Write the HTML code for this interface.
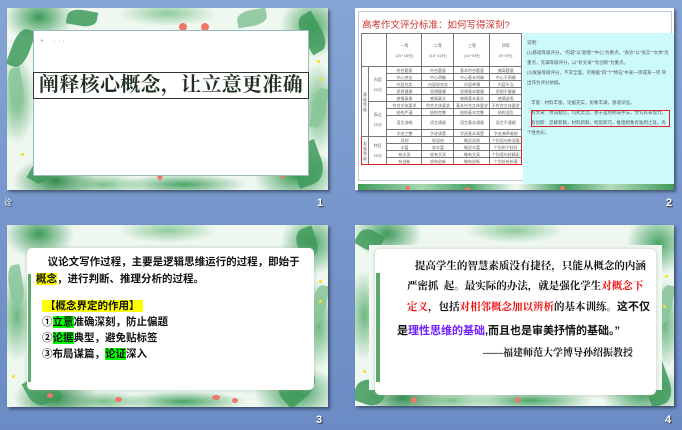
<!DOCTYPE html>
<html><head><meta charset="utf-8"><style>
*{margin:0;padding:0;box-sizing:border-box}
body{width:682px;height:430px;overflow:hidden;background:linear-gradient(180deg,#86a5d6 0%,#7696cc 50%,#6a8bc3 100%);font-family:"Liberation Sans","Noto Sans CJK SC",sans-serif;position:relative}
.s{position:absolute;background:#fff;box-shadow:2px 2px 3px rgba(0,0,0,.45);overflow:hidden}
.num{position:absolute;color:#fff;font-weight:bold;font-size:11px;text-shadow:1px 1px 1px #334}
.lf{position:absolute;border-radius:50% 0 50% 0;background:#3f9a5a;opacity:.85}
.lf2{position:absolute;border-radius:50% 0 50% 0;background:#8cc79c;opacity:.9}
.fl{position:absolute;border-radius:50%;background:#f07868}
.yd{position:absolute;width:3px;height:3px;border-radius:50%;background:#f5e020}
.frame{position:absolute;inset:0;background:
radial-gradient(ellipse 50px 35px at 10% 5%,#3e9a5a 0,transparent 70%),
radial-gradient(ellipse 45px 45px at 95% 10%,#4aa566 0,transparent 70%),
radial-gradient(ellipse 60px 35px at 15% 95%,#2f8a4a 0,transparent 70%),
radial-gradient(ellipse 60px 40px at 90% 92%,#3a9a58 0,transparent 70%),
radial-gradient(ellipse 25px 60px at 3% 50%,#6cb77f 0,transparent 75%),
radial-gradient(ellipse 25px 60px at 97% 55%,#6cb77f 0,transparent 75%),
radial-gradient(ellipse 70px 18px at 50% 3%,#8fcb9c 0,transparent 70%),
radial-gradient(ellipse 90px 15px at 55% 97%,#4aa566 0,transparent 70%),
radial-gradient(ellipse 60px 15px at 30% 97%,#7cc08c 0,transparent 70%),#eef7f0}
table{border-collapse:collapse}
td{border:1px solid #777;font-size:4px;color:#666;text-align:center;height:7px;padding:0;line-height:5px}
</style></head><body>

<!-- Slide 1 -->
<div class="s" style="left:7px;top:8px;width:321px;height:182px">
<div class="frame"></div>
<div class="lf" style="left:5px;top:20px;width:18px;height:40px;transform:rotate(20deg)"></div>
<div class="lf2" style="left:2px;top:60px;width:14px;height:40px;transform:rotate(-10deg)"></div>
<div class="lf" style="left:295px;top:5px;width:20px;height:40px;transform:rotate(-30deg)"></div>
<div class="lf2" style="left:305px;top:80px;width:14px;height:40px;transform:rotate(10deg)"></div>
<div class="lf" style="left:30px;top:130px;width:22px;height:48px;transform:rotate(30deg)"></div>
<div class="lf" style="left:285px;top:135px;width:30px;height:42px;transform:rotate(-20deg)"></div>
<div class="lf" style="left:60px;top:2px;width:30px;height:16px;transform:rotate(10deg)"></div>
<div class="lf2" style="left:230px;top:2px;width:30px;height:16px;transform:rotate(-10deg)"></div>
<div class="fl" style="left:172px;top:15px;width:8px;height:8px"></div>
<div class="fl" style="left:194px;top:15px;width:8px;height:8px"></div>
<div class="fl" style="left:65px;top:145px;width:7px;height:10px"></div>
<div class="fl" style="left:92px;top:140px;width:8px;height:10px"></div>
<div class="fl" style="left:150px;top:160px;width:6px;height:12px"></div>
<div class="fl" style="left:258px;top:155px;width:8px;height:12px"></div>
<div class="fl" style="left:272px;top:160px;width:7px;height:10px"></div>
<div class="yd" style="left:28px;top:128px"></div><div class="yd" style="left:14px;top:145px"></div><div class="yd" style="left:215px;top:157px"></div><div class="yd" style="left:312px;top:70px"></div><div class="yd" style="left:310px;top:52px"></div>
<div style="position:absolute;left:26px;top:22px;width:276px;height:146px;background:#fff;border:1px solid #9bb"></div>
<div style="position:absolute;left:33px;top:30px;font-size:7px;color:#8a8">+ &nbsp; &nbsp; · · ·</div>
<div style="position:absolute;left:26px;top:64px;width:276px;height:27px;border:1px solid #333;background:#fff;font-family:'Liberation Serif','Noto Serif CJK SC',serif;font-weight:bold;font-size:20px;line-height:25px;color:#1f2f1f;text-align:center;white-space:nowrap;letter-spacing:0.3px">阐释核心概念，让立意更准确</div>
</div>
<div class="num" style="left:4px;top:197px;font-size:8px;font-weight:normal">诠</div>
<div class="num" style="left:317px;top:197px">1</div>

<!-- Slide 2 -->
<div class="s" style="left:355px;top:8px;width:319px;height:182px">
<div style="position:absolute;left:3px;top:3px;width:314px;height:170px;border:1px solid #bcd"></div>
<div style="position:absolute;left:7px;top:9px;font-size:9.5px;color:#d03030;white-space:nowrap">高考作文评分标准：如何写得深刻?</div>
<div style="position:absolute;left:168px;top:25px;width:151px;height:151px;background:#ccfafa"></div>
<div style="position:absolute;left:172px;top:30px;width:142px;font-size:4.5px;color:#556;line-height:10px">说明：<br>(1)基础等级评分，"内容"以"题意""中心"为重点，"表达"以"语言""文体"为重点，充满等级评分，以"有文采""有创新"为重点。<br>(2)发展等级评分，不求全面，可根据"四"个"特征"中某一项或某一项 突出作为评分依据。<br><br>&nbsp;· 丰富：材料丰富，论据充实，形象丰满，意境深远。<br>&nbsp;· 有文采：用词贴切，句式灵活，善于运用修辞手法，文句有表现力。<br>&nbsp;· 有创新：见解新颖，材料新鲜，构思新巧，推理想象有独到之处。有个性色彩。</div>
<div style="position:absolute;left:176px;top:102px;width:139px;height:17px;border:1px solid #e02020"></div>
<table style="position:absolute;left:6px;top:25px;width:161px">
<tr><td colspan="2" style="height:33px;width:24px"></td><td style="width:35px">一等<br><br>(20~16分)</td><td style="width:32px">二等<br><br>(15~11分)</td><td style="width:36px">三等<br><br>(10~6分)</td><td>四等<br><br>(5~0分)</td></tr>
<tr><td rowspan="9" style="width:7px">基础等级</td><td rowspan="5">内容<br><br>20分</td><td>符合题意</td><td>符合题意</td><td>基本符合题意</td><td>偏离题意</td></tr>
<tr><td>中心突出</td><td>中心明确</td><td>中心基本明确</td><td>中心不明确</td></tr>
<tr><td>内容充实</td><td>内容较充实</td><td>内容单薄</td><td>内容不当</td></tr>
<tr><td>思想健康</td><td>思想健康</td><td>思想基本健康</td><td>思想不健康</td></tr>
<tr><td>感情真挚</td><td>感情真实</td><td>感情基本真实</td><td>感情虚假</td></tr>
<tr><td rowspan="4">表达<br><br>20分</td><td>符合文体要求</td><td>符合文体要求</td><td>基本符合文体要求</td><td>不符合文体要求</td></tr>
<tr><td>结构严谨</td><td>结构完整</td><td>结构基本完整</td><td>结构混乱</td></tr>
<tr><td style="height:14px">语言流畅</td><td>语言通顺</td><td>语言基本通顺</td><td>语言不通顺</td></tr>
<tr><td>字迹工整</td><td>字迹清楚</td><td>字迹基本清楚</td><td>字迹潦草难辨</td></tr>
<tr><td rowspan="4" style="border-left:1.5px solid #e02020;border-bottom:1.5px solid #e02020">发展等级</td><td rowspan="4" style="border-bottom:1.5px solid #e02020">特征<br><br>20分</td><td style="border-top:1.5px solid #e02020">深刻</td><td style="border-top:1.5px solid #e02020">较深刻</td><td style="border-top:1.5px solid #e02020">略显深刻</td><td style="border-top:1.5px solid #e02020;border-right:1.5px solid #e02020">个别语句有深意</td></tr>
<tr><td>丰富</td><td>较丰富</td><td>略显丰富</td><td style="border-right:1.5px solid #e02020">个别例子较好</td></tr>
<tr><td>有文采</td><td>较有文采</td><td>略有文采</td><td style="border-right:1.5px solid #e02020">个别语句较精彩</td></tr>
<tr><td style="border-bottom:1.5px solid #e02020">有创新</td><td style="border-bottom:1.5px solid #e02020">较有创新</td><td style="border-bottom:1.5px solid #e02020">略有创新</td><td style="border-bottom:1.5px solid #e02020;border-right:1.5px solid #e02020">个别处有新意</td></tr>
</table>
<div style="position:absolute;left:3px;top:176px;width:316px;height:14px;background:linear-gradient(90deg,#3f9a5a,#a7d8b0 20%,#4aa566 35%,#f4faf5 50%,#3f9a5a 65%,#b5dcbb 80%,#3f9a5a)"></div>
<div class="fl" style="left:50px;top:178px;width:5px;height:4px"></div><div class="fl" style="left:110px;top:179px;width:5px;height:4px"></div><div class="fl" style="left:205px;top:178px;width:5px;height:4px"></div>
</div>
<div class="num" style="left:666px;top:197px">2</div>

<!-- Slide 3 -->
<div class="s" style="left:7px;top:225px;width:321px;height:182px">
<div class="frame"></div>
<div class="lf" style="left:20px;top:150px;width:30px;height:30px;transform:rotate(60deg)"></div>
<div class="lf" style="left:270px;top:145px;width:40px;height:30px;transform:rotate(-40deg)"></div>
<div class="lf" style="left:290px;top:3px;width:20px;height:30px;transform:rotate(-20deg)"></div>
<div class="lf2" style="left:305px;top:60px;width:14px;height:40px;transform:rotate(10deg)"></div>
<div class="lf2" style="left:2px;top:40px;width:14px;height:40px;transform:rotate(-10deg)"></div>
<div class="fl" style="left:40px;top:168px;width:6px;height:5px"></div><div class="fl" style="left:108px;top:172px;width:7px;height:5px"></div><div class="fl" style="left:205px;top:170px;width:8px;height:5px"></div><div class="fl" style="left:225px;top:173px;width:6px;height:5px"></div>
<div class="yd" style="left:312px;top:55px"></div><div class="yd" style="left:312px;top:75px"></div><div class="yd" style="left:5px;top:150px"></div>
<div style="position:absolute;left:20px;top:23px;width:287px;height:142px;background:#fff;border-radius:5px;box-shadow:0 0 4px rgba(150,180,150,.6)"></div>
<div style="position:absolute;left:21px;top:49px;width:3px;height:108px;background:#5aab6c"></div>
<div style="position:absolute;left:29px;top:29px;width:285px;font-size:10.5px;line-height:17px;color:#111;font-weight:bold;white-space:nowrap">&nbsp;&nbsp;&nbsp;&nbsp;议论文写作过程，主要是逻辑思维运行的过程，即始于<br><span style="background:#ff0">概念</span>，进行判断、推理分析的过程。</div>
<div style="position:absolute;left:35px;top:73px;font-size:10.5px;line-height:16px;color:#111;font-weight:bold;white-space:nowrap">
<span style="background:#ff0;padding:0 3px">【概念界定的作用】</span><br>
①<span style="background:#0f0">立意</span>准确深刻，防止偏题<br>
②<span style="background:#0f0">论据</span>典型，避免贴标签<br>
③布局谋篇，<span style="background:#0f0">论证</span>深入</div>
</div>
<div class="num" style="left:316px;top:414px">3</div>

<!-- Slide 4 -->
<div class="s" style="left:355px;top:225px;width:319px;height:181px">
<div class="frame"></div>
<div class="lf" style="left:2px;top:5px;width:25px;height:20px;transform:rotate(30deg)"></div>
<div class="lf" style="left:290px;top:140px;width:25px;height:40px;transform:rotate(-20deg)"></div>
<div class="lf" style="left:0px;top:155px;width:30px;height:25px;transform:rotate(20deg)"></div>
<div class="lf2" style="left:303px;top:60px;width:14px;height:40px;transform:rotate(10deg)"></div>
<div class="fl" style="left:56px;top:172px;width:6px;height:6px"></div><div class="fl" style="left:160px;top:172px;width:5px;height:6px"></div>
<div class="yd" style="left:310px;top:50px"></div><div class="yd" style="left:308px;top:80px"></div><div class="yd" style="left:8px;top:145px"></div>
<div style="position:absolute;left:14px;top:20px;width:293px;height:145px;background:#f3f8f3"></div>
<div style="position:absolute;left:20px;top:24px;width:281px;height:146px;background:#fff;border-radius:5px;box-shadow:0 0 4px rgba(160,180,160,.6)"></div>
<div style="position:absolute;left:21px;top:48px;width:4px;height:109px;background:#5aab6c"></div>
<div style="position:absolute;left:52px;top:32px;width:250px;font-family:'Liberation Serif','Noto Serif CJK SC',serif;font-weight:bold;font-size:10.5px;line-height:20px;color:#111;white-space:nowrap">
&nbsp;&nbsp;&nbsp;提高学生的智慧素质没有捷径，只能从概念的内涵<br>
严密抓&nbsp;&nbsp;起。最实际的办法，就是强化学生<span style="color:#f01010">对概念下</span><br>
<span style="color:#f01010">定义</span>，包括<span style="color:#f01010">对相邻概念加以辨析</span>的基本训练。<span style="font-family:'Liberation Sans','Noto Sans CJK SC',sans-serif;font-size:11px">这不仅</span></div>
<div style="position:absolute;left:42px;top:97px;font-size:11px;font-weight:bold;color:#111;white-space:nowrap">是<span style="color:#7020ff">理性思维的基础</span>,而且也是审美抒情的基础。”</div>
<div style="position:absolute;left:128px;top:119px;font-family:'Liberation Serif','Noto Serif CJK SC',serif;font-weight:bold;font-size:10px;color:#111;white-space:nowrap">——福建师范大学博导孙绍振教授</div>
</div>
<div class="num" style="left:665px;top:414px">4</div>
</body></html>
